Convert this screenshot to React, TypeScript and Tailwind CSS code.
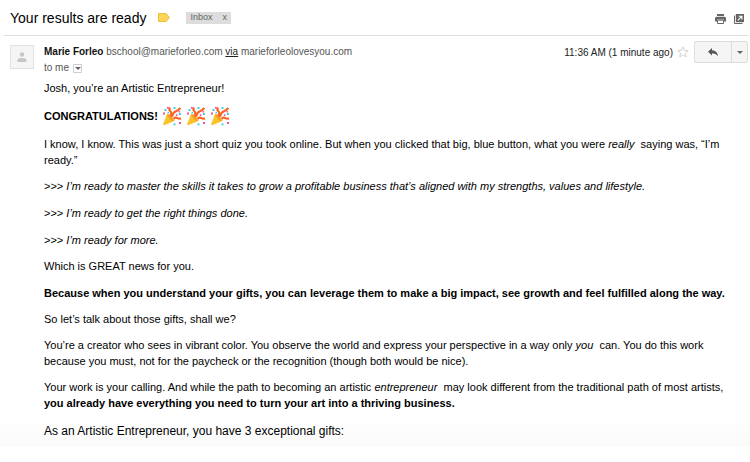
import type { ReactNode } from "react";

const mantras = [
  "I’m ready to master the skills it takes to grow a profitable business that’s aligned with my strengths, values and lifestyle.",
  "I’m ready to get the right things done.",
  "I’m ready for more.",
];

function PartyPopper() {
  return (
    <svg viewBox="0 0 20 20" className="size-5" role="img" aria-label="Party popper">
      <path d="M5 8Q9 9 12.500 15L2 19.300Q.8 19.300 1.200 18Z" fill="#fdc22b" />
      <path d="M5 8Q9 9 12.500 15 9.500 15 7.500 12.800T5 8Z" fill="#f3a01d" />
      <g fill="none" stroke="#fa6423" strokeWidth="2.200">
        <path d="M8 9.500Q10.500 7.500 8.500 5.500T8 1.500" />
        <path d="M9.800 11Q11 6.500 13.500 5.500T18.500 2" />
        <path d="M11.500 13Q13 11 15 12T19 12.500" />
      </g>
      <g fill="#3fcbe9">
        <path d="M2.500 3h2v2h-2zM11.500 1h2v2h-2zM17 7h2v2h-2zM11.500 17.500h2v1.700h-2zM5.500 6h1.500v1.500H5.500z" />
      </g>
      <g fill="#ee5599">
        <path d="M1 6.500h2v2H1zM5 1h1.700v1.700H5zM13.800 8.200h1.700v1.700h-1.700zM17 16h2v2h-2zM16.500 5h1.500v1.500h-1.500z" />
      </g>
    </svg>
  );
}

function Caret() {
  return (
    <svg viewBox="0 0 6 3" className="h-[3px] w-1.5" aria-hidden>
      <path d="M0 0h6L3 3z" fill="#666" />
    </svg>
  );
}

function SubjectBar() {
  return (
    <header className="ml-1 mr-0.5 flex h-9 items-center border-b border-[#dedede] pl-1.5 pr-1">
      <h1 className="text-sm text-black">Your results are ready</h1>
      <svg viewBox="0 0 12 9" className="ml-3 h-[9px] w-3" aria-label="Important" role="img">
        <path d="M.5.5h7.700L11.300 4.500 8.200 8.500H.5z" fill="#fdd55a" stroke="#edbd3b" />
      </svg>
      <div className="ml-4 flex h-3 items-center bg-[#ddd] px-1 text-[9px] text-[#666]">
        <span>Inbox</span>
        <button type="button" aria-label="Remove Inbox label" className="ml-2.5">x</button>
      </div>
      <div className="ml-auto flex items-center gap-2 pt-0.5">
        <button type="button" aria-label="Print">
          <svg viewBox="0 0 11 10" className="h-2.5 w-[11px]" aria-hidden>
            <path d="M2 0h7v2H2zM1.500 2.700h8Q11 2.700 11 4.200V7.500H9V5.500H2v2H0V4.200Q0 2.700 1.500 2.700z" fill="#666" />
            <path d="M2.500 6.200h6v3.300h-6z" fill="#fff" stroke="#666" />
          </svg>
        </button>
        <button type="button" aria-label="Open in new window">
          <svg viewBox="0 0 10 10" className="size-2.5" aria-hidden>
            <path d="M.5 1.500v8h8" fill="none" stroke="#666" />
            <path d="M1.800 0H10v8.200H1.800z" fill="#666" />
            <path d="M3.800 6.300 7.500 2.600M4.700 2.200H7.900V5.400" fill="none" stroke="#fff" strokeWidth="1.100" />
          </svg>
        </button>
      </div>
    </header>
  );
}

function MessageHeader() {
  return (
    <div className="mt-[5px] flex items-start pl-2.5 pr-0.5">
      <div className="mt-1 flex size-6 shrink-0 items-center justify-center border border-[#e2e2e2] bg-[#f5f5f5]">
        <svg viewBox="0 0 10 10" className="size-2.5" aria-hidden>
          <circle cx="5" cy="2.500" r="2.200" fill="#c6c6c6" />
          <path d="M.5 10V8Q.5 6 5 6T9.500 8V10z" fill="#c6c6c6" />
        </svg>
      </div>
      <div className="ml-2.5 mt-[3px] text-[10px] leading-4 text-[#555]">
        <p>
          <b className="text-[#111]">Marie Forleo</b> bschool@marieforleo.com{" "}
          <a href="#via" className="text-[#222] underline">via</a> marieforleolovesyou.com
        </p>
        <div className="flex items-center gap-1">
          to me
          <button
            type="button"
            aria-label="Show details"
            className="flex size-[9px] items-center justify-center rounded-[1px] border border-[#ccc]"
          >
            <Caret />
          </button>
        </div>
      </div>
      <div className="ml-auto flex items-center">
        <time className="text-[10px] text-[#222]">11:36 AM (1 minute ago)</time>
        <button type="button" aria-label="Star" className="ml-1">
          <svg viewBox="0 0 12 12" className="size-3" aria-hidden>
            <path
              d="M6 .9 7.400 4.400 11.300 4.700 8.300 7.100 9.300 10.900 6 8.800 2.700 10.900 3.700 7.100.7 4.700 4.600 4.400z"
              fill="#fff"
              stroke="#c8c8c8"
              strokeWidth=".8"
            />
          </svg>
        </button>
        <div className="ml-[5px] flex h-[22px] rounded-[2px] border border-[#dcdcdc] bg-[#f5f5f5]">
          <button type="button" aria-label="Reply" className="flex w-9 items-center justify-center">
            <svg viewBox="0 0 10 8" className="h-2 w-2.5" aria-hidden>
              <path d="M4 0v2.200Q9.500 2.700 10 8 7.800 5.200 4 5.200V7.500L0 3.700z" fill="#555" />
            </svg>
          </button>
          <button
            type="button"
            aria-label="More"
            className="flex w-4 items-center justify-center border-l border-[#dcdcdc]"
          >
            <Caret />
          </button>
        </div>
      </div>
    </div>
  );
}

function Paragraph({ children }: { children: ReactNode }) {
  return <p className="mt-2.5">{children}</p>;
}

export default function App() {
  return (
    <div className="bg-white font-['Liberation_Sans',Arial,sans-serif]">
      <SubjectBar />
      <MessageHeader />
      <main className="bg-[linear-gradient(to_top,#fafafa,#fff_28px)] pb-[7px] pl-11 pr-3 pt-1 text-[11px] leading-4 text-black">
        <p>Josh, you’re an Artistic Entrepreneur!</p>
        <div className="mt-2.5 flex h-5 items-center gap-1">
          <b>CONGRATULATIONS!</b>
          <PartyPopper />
          <PartyPopper />
          <PartyPopper />
        </div>
        <Paragraph>
          I know, I know. This was just a short quiz you took online. But when you clicked that big, blue
          button, what you were <i>really</i>&nbsp; saying was, “I’m
          <br />
          ready.”
        </Paragraph>
        <div className="mt-2.5 flex flex-col gap-[11px]">
          {mantras.map((mantra) => (
            <p key={mantra}>
              &gt;&gt;&gt; <i>{mantra}</i>
            </p>
          ))}
        </div>
        <Paragraph>Which is GREAT news for you.</Paragraph>
        <p className="mt-[11px] font-bold">
          Because when you understand your gifts, you can leverage them to make a big impact, see growth and
          feel fulfilled along the way.
        </p>
        <Paragraph>So let’s talk about those gifts, shall we?</Paragraph>
        <Paragraph>
          You’re a creator who sees in vibrant color. You observe the world and express your perspective in a
          way only <i>you</i>&nbsp; can. You do this work
          <br />
          because you must, not for the paycheck or the recognition (though both would be nice).
        </Paragraph>
        <Paragraph>
          Your work is your calling. And while the path to becoming an artistic <i>entrepreneur</i>&nbsp; may
          look different from the traditional path of most artists,
          <br />
          <b>you already have everything you need to turn your art into a thriving business.</b>
        </Paragraph>
        <p className="mt-3 text-xs leading-4">As an Artistic Entrepreneur, you have 3 exceptional gifts:</p>
      </main>
    </div>
  );
}
